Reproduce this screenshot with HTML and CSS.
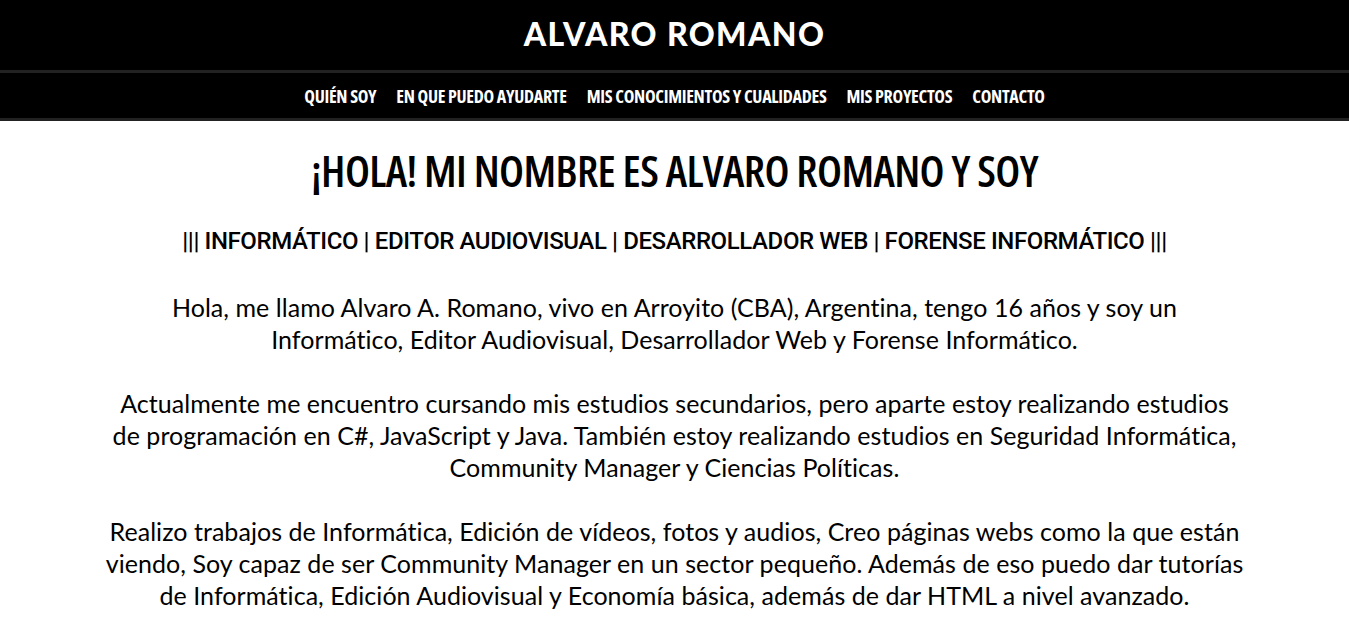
FILE: index.html
```html
<!DOCTYPE html>
<html lang="es">
<head>
<meta charset="utf-8">
<title>Alvaro Romano</title>
<link rel="stylesheet" href="styles.css">
</head>
<body>
<header class="site-header">
  <div class="brand">ALVARO ROMANO</div>
  <nav class="main-nav">
    <a href="#" class="nav-link">QUIÉN SOY</a>
    <a href="#" class="nav-link">EN QUE PUEDO AYUDARTE</a>
    <a href="#" class="nav-link">MIS CONOCIMIENTOS Y CUALIDADES</a>
    <a href="#" class="nav-link">MIS PROYECTOS</a>
    <a href="#" class="nav-link">CONTACTO</a>
  </nav>
</header>
<main class="intro">
  <h1 class="intro-title">¡HOLA! MI NOMBRE ES ALVARO ROMANO Y SOY</h1>
  <h2 class="intro-roles">||| INFORMÁTICO | EDITOR AUDIOVISUAL | DESARROLLADOR WEB | FORENSE INFORMÁTICO |||</h2>
  <div class="intro-text">
    <p>Hola, me llamo Alvaro A. Romano, vivo en Arroyito (CBA), Argentina, tengo 16 años y soy un Informático, Editor Audiovisual, Desarrollador Web y Forense Informático.</p>
    <p>Actualmente me encuentro cursando mis estudios secundarios, pero aparte estoy realizando estudios de programación en C#, JavaScript y Java. También estoy realizando estudios en Seguridad Informática, Community Manager y Ciencias Políticas.</p>
    <p>Realizo trabajos de Informática, Edición de vídeos, fotos y audios, Creo páginas webs como la que están viendo, Soy capaz de ser Community Manager en un sector pequeño. Además de eso puedo dar tutorías de Informática, Edición Audiovisual y Economía básica, además de dar HTML a nivel avanzado.</p>
  </div>
</main>
</body>
</html>
```
FILE: styles.css
```css
* { box-sizing: border-box; }
html, body { margin: 0; padding: 0; }
body {
  background: #fff;
  color: #000;
  font-family: "Lato", "Liberation Sans", sans-serif;
}
.site-header {
  background: #000;
}
.brand {
  height: 70px;
  display: flex;
  align-items: center;
  justify-content: center;
  color: #fff;
  font-family: "Lato", sans-serif;
  font-weight: 900;
  font-size: 32px;
  letter-spacing: 1.4px;
  padding-bottom: 3px;
}
.main-nav {
  border-top: 3px solid #222;
  border-bottom: 3px solid #222;
  height: 51px;
  display: flex;
  justify-content: center;
  align-items: center;
  gap: 20px;
}
.nav-link {
  color: #fff;
  text-decoration: none;
  font-family: "Open Sans", sans-serif;
  font-stretch: 75%;
  font-weight: 700;
  font-size: 18px;
  letter-spacing: -0.3px;
}
.intro {
  text-align: center;
  width: 1140px;
  margin: 0 auto;
}
.intro-title {
  margin: 19px 0 0;
  font-family: "Open Sans", sans-serif;
  font-stretch: 75%;
  font-weight: 600;
  font-size: 44px;
  letter-spacing: -0.6px;
  line-height: 60px;
}
.intro-roles {
  margin: 25px 0 0;
  font-family: "Roboto", sans-serif;
  font-weight: 500;
  font-size: 24px;
  letter-spacing: -0.4px;
  line-height: 32px;
}
.intro-text {
  margin-top: 34px;
}
.intro-text p {
  margin: 0 0 32px;
  font-size: 25px;
  letter-spacing: 0.05px;
  line-height: 32px;
}
```
